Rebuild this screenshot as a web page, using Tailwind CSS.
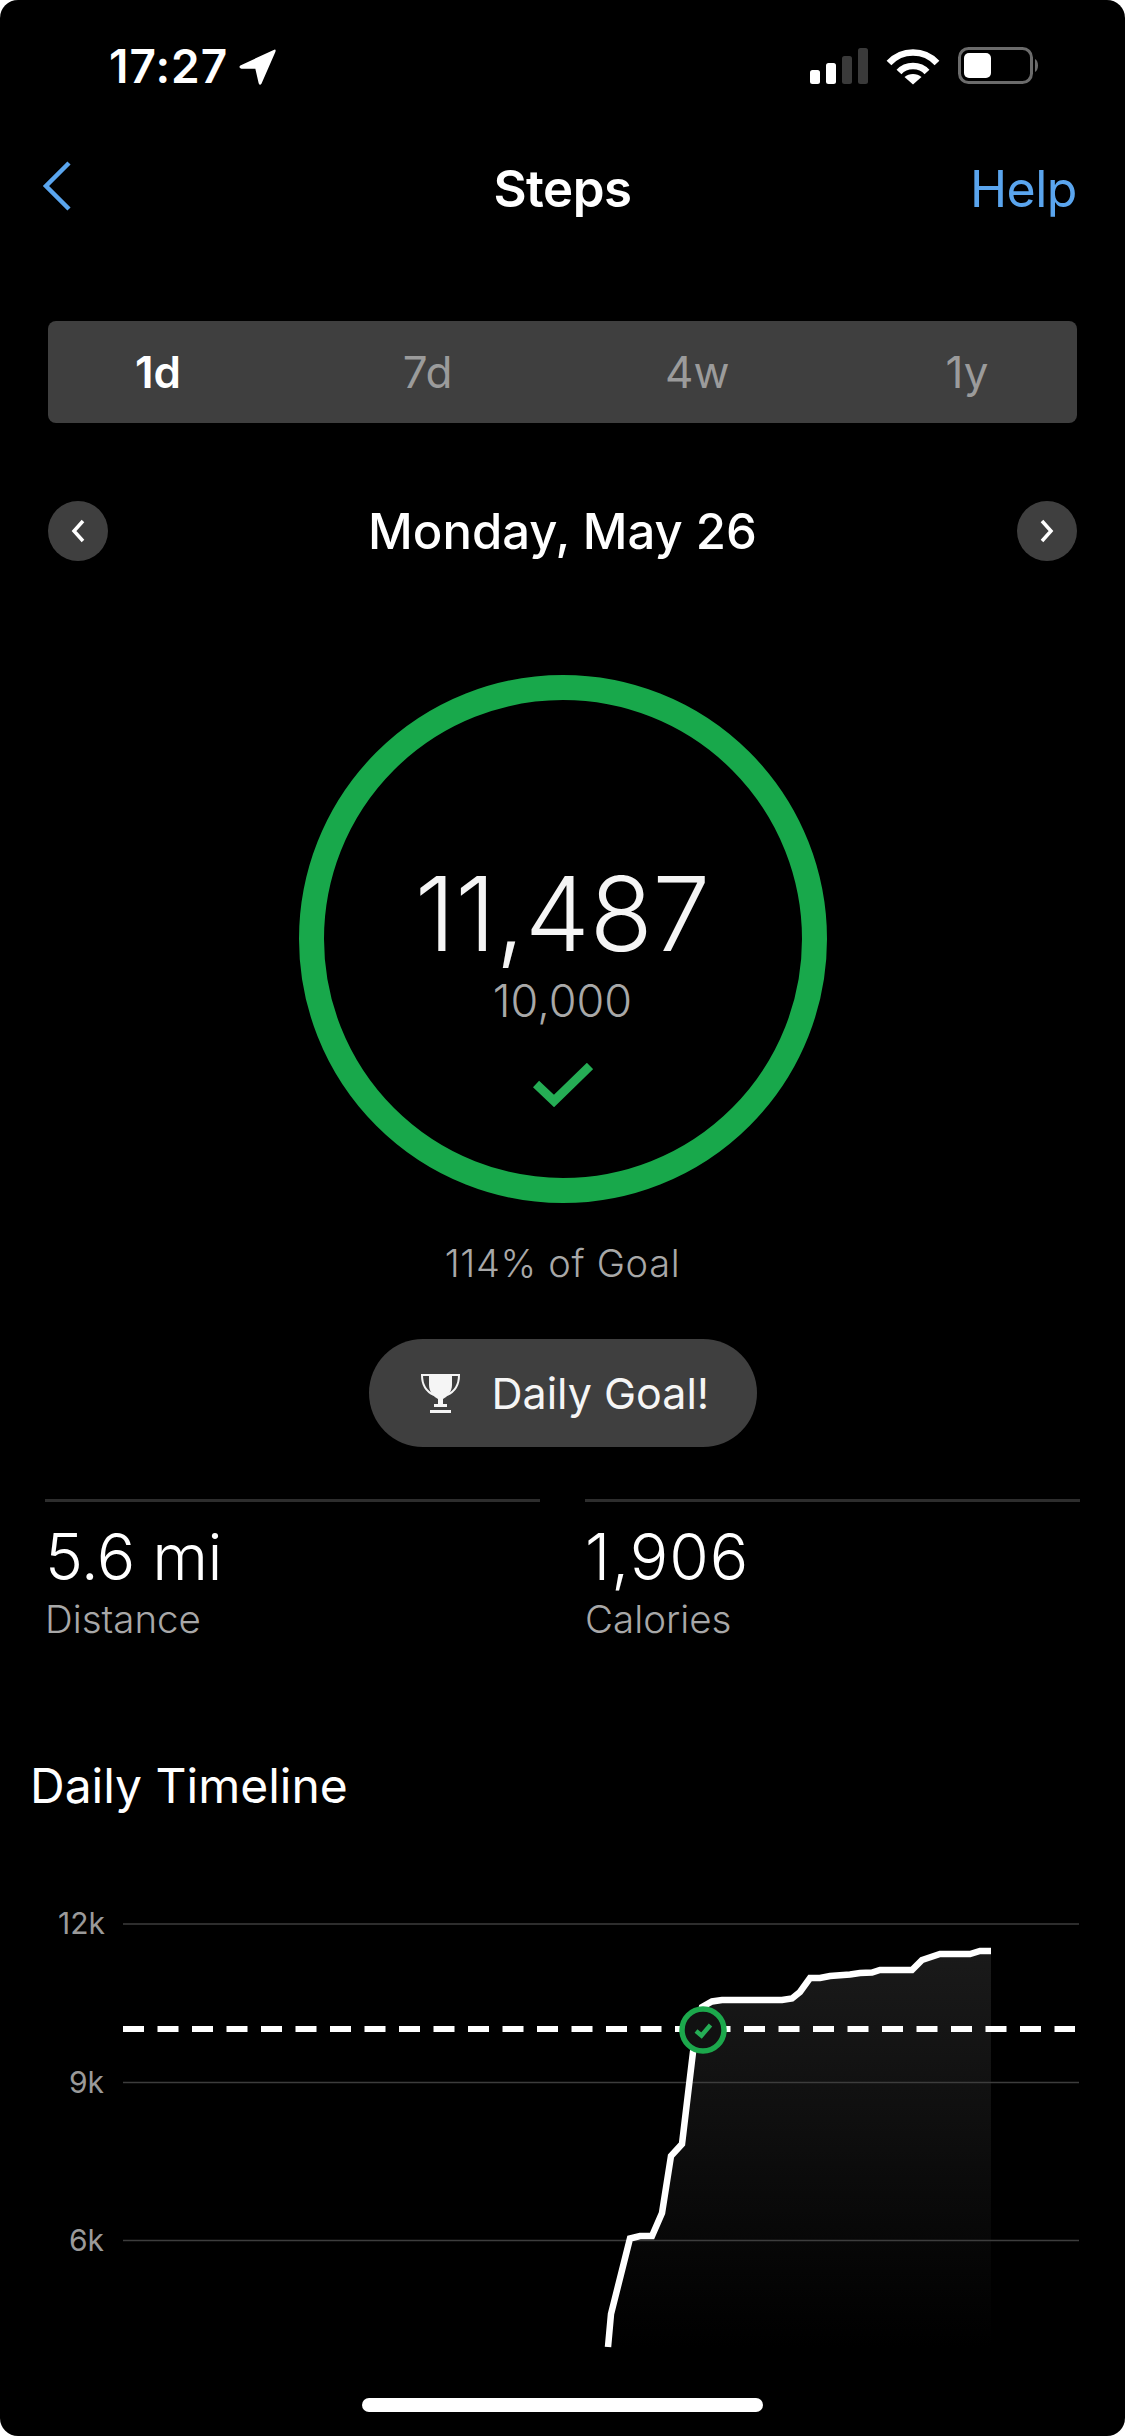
<!DOCTYPE html>
<html>
<head>
  <title>Steps</title>
  <script src="https://cdn.jsdelivr.net/npm/@tailwindcss/browser@4"></script>
</head>
<body class="bg-white">
  <div class="relative w-[1125px] h-[2436px] overflow-hidden rounded-[18px] bg-black text-white font-['Inter',sans-serif]">

    <!-- Status bar -->
    <div class="h-[47px]"></div>
    <div class="flex items-center justify-between h-[37px] pl-[109px] pr-[85px]">
      <div class="flex items-center gap-[9px]">
        <span class="text-[46px] leading-none font-semibold tracking-[1px]">17:27</span>
        <svg class="w-[40px] h-[40px]" viewBox="0 0 36 36"><path d="M3 17.5 33 3.5 Q35.5 2.5 34.5 5.5 L22 34 Q20.500 36 19.500 33.500 L16.500 20.500 4 20.500 Q1 19.500 3 17.500Z" fill="#fff"/></svg>
      </div>
      <div class="flex items-center">
        <svg class="w-[232px] h-[40px]" viewBox="0 0 232 40" fill="none">
          <rect x="2" y="24" width="10" height="14" rx="2.500" fill="#fff"/>
          <rect x="18" y="17" width="10" height="21" rx="2.500" fill="#fff"/>
          <rect x="34" y="10" width="10" height="28" rx="2.500" fill="#3a3a3a"/>
          <rect x="50" y="2" width="10" height="36" rx="2.500" fill="#3a3a3a"/>
          <path d="M81 17 C94 3 116 3 129 17" stroke="#fff" stroke-width="6.500"/>
          <path d="M91 26 C98 18 112 18 119 26" stroke="#fff" stroke-width="6.500"/>
          <path d="M105 38.500 96.500 31 C101 27 109 27 113.500 31Z" fill="#fff"/>
          <rect x="151.500" y="2.500" width="72" height="34" rx="9" stroke="#6b6b6b" stroke-width="3"/>
          <rect x="156" y="7" width="27" height="25" rx="5" fill="#fff"/>
          <path d="M227 13 C231 15 231 24 227 26Z" fill="#6b6b6b"/>
        </svg>
      </div>
    </div>

    <!-- Nav -->
    <div class="flex items-center justify-between h-[70px] mt-[65px] pl-[42px] pr-[48px]">
      <svg class="w-[30px] h-[50px] mt-[3px]" viewBox="0 0 30 50" fill="none"><path d="M27 2 4 25 27 48" stroke="#5aa5ee" stroke-width="4.500"/></svg>
      <span class="absolute left-0 right-0 mt-[9px] text-center text-[51px] leading-none font-semibold tracking-[-0.5px]">Steps</span>
      <span class="mt-[9px] text-[50px] leading-none font-normal text-[#5aa5ee] tracking-[-0.5px]">Help</span>
    </div>

    <!-- Range tabs -->
    <div class="flex items-center justify-between mx-[48px] mt-[102px] h-[102px] rounded-[8px] bg-[#3f3f3f] text-[44px]">
      <span class="w-[220px] text-center font-semibold">1d</span>
      <span class="w-[220px] text-center text-[#9b9b9b]">7d</span>
      <span class="w-[220px] text-center text-[#9b9b9b]">4w</span>
      <span class="w-[220px] text-center text-[#9b9b9b]">1y</span>
    </div>

    <!-- Date row -->
    <div class="flex items-center justify-between mx-[48px] mt-[78px] h-[60px]">
      <div class="flex items-center justify-center w-[60px] h-[60px] rounded-full bg-[#3f3f3f]">
        <svg class="w-[14px] h-[24px]" viewBox="0 0 14 24" fill="none"><path d="M12 2 3 12 12 22" stroke="#fff" stroke-width="3.500"/></svg>
      </div>
      <span class="text-[49px] leading-none font-medium">Monday, May 26</span>
      <div class="flex items-center justify-center w-[60px] h-[60px] rounded-full bg-[#3f3f3f]">
        <svg class="w-[14px] h-[24px]" viewBox="0 0 14 24" fill="none"><path d="M2 2 11 12 2 22" stroke="#fff" stroke-width="3.500"/></svg>
      </div>
    </div>

    <!-- Goal ring -->
    <div class="flex flex-col items-center w-[528px] h-[528px] mx-auto mt-[114px] rounded-full border-[25px] border-[#18a84b]">
      <span class="mt-[164px] text-[103px] leading-[100px] font-light text-[#f5f5f5]">11,487</span>
      <span class="mt-[12px] text-[45px] leading-[50px] font-light text-[#a8a8a8]">10,000</span>
      <svg class="w-[60px] h-[44px] mt-[37px]" viewBox="0 0 60 44" fill="none"><path d="M3 21 21 38 57 3" stroke="#25ad55" stroke-width="9"/></svg>
    </div>

    <p class="mt-[38px] text-center text-[38px] leading-[44px] font-light text-[#a8a8a8] tracking-[0.7px]">114% of Goal</p>

    <!-- Badge -->
    <div class="flex items-center gap-[31px] w-[388px] h-[108px] mx-auto mt-[54px] pl-[51px] rounded-full bg-[#3f3f3f]">
      <svg class="w-[41px] h-[40px] shrink-0" viewBox="0 0 41 40" fill="none">
        <path d="M9 1H32V12C32 19 27 24 23 26V31H27V34H14V31H18V26C14 24 9 19 9 12Z" fill="#f5f5f5"/>
        <path d="M9 2H2C2 12 7 19 14 22M32 2H39C39 12 34 19 27 22" stroke="#f5f5f5" stroke-width="2"/>
        <rect x="10" y="37" width="21" height="3" fill="#f5f5f5"/>
      </svg>
      <span class="text-[43px] leading-none font-normal text-[#f5f5f5] whitespace-nowrap">Daily Goal!</span>
    </div>

    <!-- Stats -->
    <div class="grid grid-cols-[495px_495px] gap-[45px] ml-[45px] mt-[52px]">
      <div class="border-t-[3px] border-[#2d2d2d] pt-[20px]">
        <div class="text-[64px] leading-[70px] font-light tracking-[-0.5px]">5.6 mi</div>
        <div class="text-[38.500px] leading-[44px] font-light text-[#a8a8a8] mt-[5px]">Distance</div>
      </div>
      <div class="border-t-[3px] border-[#2d2d2d] pt-[20px]">
        <div class="text-[64px] leading-[70px] font-light tracking-[1px]">1,906</div>
        <div class="text-[38.500px] leading-[44px] font-light text-[#a8a8a8] mt-[5px]">Calories</div>
      </div>
    </div>

    <h2 class="ml-[30px] mt-[117px] text-[48px] leading-[56px] font-normal">Daily Timeline</h2>

    <!-- Chart -->
    <svg class="absolute left-0 top-[1900px] w-[1125px] h-[460px]" viewBox="0 1900 1125 460" fill="none">
      <defs>
        <linearGradient id="areaFill" x1="0" y1="1951" x2="0" y2="2347" gradientUnits="userSpaceOnUse">
          <stop offset="0" stop-color="#1a1a1a"/>
          <stop offset="1" stop-color="#000"/>
        </linearGradient>
      </defs>
      <path d="M608 2347 611 2314 630 2238.500 640 2236 652 2236 662 2213 671 2156 682 2144 693 2052 702 2007 712 2001.500 722 2000 782 2000 792 1998.500 800 1992 810 1978 820 1978 830 1976 850 1974.500 860 1973 872 1972.500 880 1970 912 1970 922 1960 940 1954 970 1954 980 1951 991 1951 991 2347Z" fill="url(#areaFill)"/>
      <g stroke="#3d3d3d" stroke-width="1.500">
        <path d="M123 1924H1079"/>
        <path d="M123 2082.500H1079"/>
        <path d="M123 2240.500H1079"/>
      </g>
      <path d="M123 2029H1075" stroke="#fff" stroke-width="6" stroke-dasharray="21 13.500"/>
      <path d="M608 2347 611 2314 630 2238.500 640 2236 652 2236 662 2213 671 2156 682 2144 693 2052 702 2007 712 2001.500 722 2000 782 2000 792 1998.500 800 1992 810 1978 820 1978 830 1976 850 1974.500 860 1973 872 1972.500 880 1970 912 1970 922 1960 940 1954 970 1954 980 1951 991 1951" stroke="#fff" stroke-width="6.500"/>
      <circle cx="703" cy="2030" r="21" fill="#111" stroke="#1ca84c" stroke-width="5.500"/>
      <path d="M696 2031 701.500 2035.500 710.500 2025" stroke="#25ad55" stroke-width="4.500"/>
      <g fill="#9a9a9a" font-size="30" text-anchor="end">
        <text x="105" y="1934">12k</text>
        <text x="104" y="2093">9k</text>
        <text x="104" y="2251">6k</text>
      </g>
    </svg>

    <!-- Home indicator -->
    <div class="absolute left-[362px] top-[2398px] w-[401px] h-[14px] rounded-full bg-white"></div>
  </div>
</body>
</html>
